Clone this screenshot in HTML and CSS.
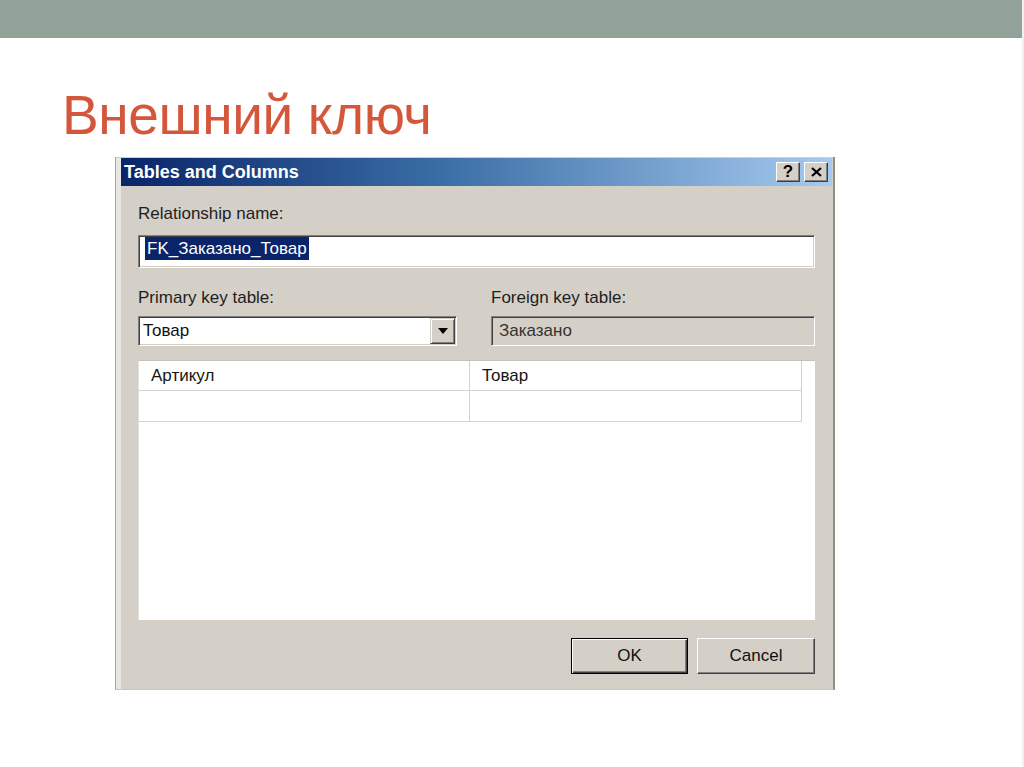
FILE: index.html
```html
<!DOCTYPE html>
<html lang="ru">
<head>
<meta charset="utf-8">
<title>Внешний ключ</title>
<link rel="stylesheet" href="styles.css">
</head>
<body>
<div class="page">
  <div class="topbar"></div>
  <h1 class="slide-title">Внешний ключ</h1>
  <div class="dialog">
    <div class="frame">
      <div class="titlebar">
        <span class="caption">Tables and Columns</span>
        <div class="tb-buttons">
          <span class="tb-btn help">?</span>
          <span class="tb-btn close">
            <svg width="11" height="10" viewBox="0 0 11 10"><path d="M1 1 L10 9 M10 1 L1 9" stroke="#000" stroke-width="2.2" fill="none"/></svg>
          </span>
        </div>
      </div>
      <div class="content">
        <div class="label">Relationship name:</div>
        <div class="field name-field"><span class="sel">FK_Заказано_Товар</span></div>
        <div class="keys">
          <div class="col">
            <div class="label">Primary key table:</div>
            <div class="field combo">
              <span>Товар</span>
              <span class="dd"><svg width="10" height="6" viewBox="0 0 10 6"><path d="M0 0 H10 L5 6 Z" fill="#000"/></svg></span>
            </div>
          </div>
          <div class="col">
            <div class="label">Foreign key table:</div>
            <div class="field disabled">Заказано</div>
          </div>
        </div>
        <div class="grid">
          <div class="grid-table">
            <div class="cell">Артикул</div>
            <div class="cell">Товар</div>
            <div class="cell"></div>
            <div class="cell"></div>
          </div>
        </div>
        <div class="actions">
          <button class="btn default">OK</button>
          <button class="btn cancel">Cancel</button>
        </div>
      </div>
    </div>
  </div>
</div>
</body>
</html>
```

FILE: styles.css
```css
html, body {
  margin: 0;
  padding: 0;
  background: #ffffff;
}

body {
  font-family: "Liberation Sans", Arial, sans-serif;
}

.page {
  width: 1024px;
  height: 767px;
  overflow: hidden;
  box-sizing: border-box;
  border-right: 2px solid #f0f0f0;
}

.topbar {
  height: 38px;
  background: #93a299;
}

.slide-title {
  margin: 50px 0 0 62px;
  height: 55px;
  font-family: "Liberation Sans", Arial, sans-serif;
  font-weight: 400;
  font-size: 55px;
  line-height: 55px;
  letter-spacing: -0.4px;
  color: #d4573b;
}

.dialog {
  margin: 14px 0 0 115px;
  width: 720px;
  height: 533px;
  box-sizing: border-box;
  background: #d4d0c8;
  border-left: 1px solid #a5a39d;
  border-right: 2px solid #8f8d87;
  border-bottom: 1px solid #c8c6c0;
  padding: 1px 1px 0 0;
  display: flex;
}

.frame {
  flex: 1;
  border-left: 5px solid #e9e7e1;
  display: flex;
  flex-direction: column;
}

.titlebar {
  height: 28px;
  flex: none;
  background: linear-gradient(90deg, #0a246a 0%, #3a6ea5 45%, #a6caf0 100%);
  display: flex;
  align-items: center;
  justify-content: space-between;
  padding: 0 4px 0 3px;
}

.caption {
  color: #ffffff;
  font-weight: bold;
  font-size: 18px;
}

.tb-buttons {
  display: flex;
  gap: 4px;
}

.tb-btn {
  width: 24px;
  height: 20px;
  box-sizing: border-box;
  background: #d4d0c8;
  border: 1px solid;
  border-color: #ffffff #404040 #404040 #ffffff;
  box-shadow: inset -1px -1px #808080;
  display: flex;
  align-items: center;
  justify-content: center;
  font-family: "Liberation Sans", Arial, sans-serif;
  font-weight: bold;
  font-size: 17px;
  color: #000;
}

.content {
  flex: 1;
  padding: 18px 17px 0 17px;
  display: flex;
  flex-direction: column;
}

.label {
  font-size: 17px;
  line-height: 20px;
  color: #1e1e1e;
}

.field {
  box-sizing: border-box;
  background: #ffffff;
  border: 1px solid;
  border-color: #808080 #ffffff #ffffff #808080;
  box-shadow: inset 1px 1px #404040, inset -1px -1px #d4d0c8;
  display: flex;
  align-items: center;
  font-size: 17px;
  color: #111;
}

.name-field {
  margin-top: 11px;
  height: 33px;
  padding-left: 6px;
  align-items: flex-start;
}

.sel {
  margin-top: 1px;
  height: 23px;
  line-height: 23px;
  padding: 0 2px;
  background: #0a246a;
  color: #ffffff;
}

.keys {
  margin-top: 20px;
  display: grid;
  grid-template-columns: 319px 1fr;
  column-gap: 34px;
}

.keys .field {
  margin-top: 8px;
  height: 30px;
}

.combo {
  padding: 0 1px 0 4px;
}

.dd {
  margin-left: auto;
  width: 25px;
  height: 26px;
  box-sizing: border-box;
  background: #d4d0c8;
  border: 1px solid;
  border-color: #d4d0c8 #404040 #404040 #d4d0c8;
  box-shadow: inset 1px 1px #ffffff, inset -1px -1px #808080;
  display: flex;
  align-items: center;
  justify-content: center;
}

.disabled {
  background: #d4d0c8;
  color: #333;
  padding-left: 7px;
}

.grid {
  margin-top: 14px;
  height: 260px;
  box-sizing: border-box;
  background: #ffffff;
  border-top: 1px solid #c4c2bc;
  border-left: 1px solid #e4e2dc;
}

.grid-table {
  width: 664px;
  display: grid;
  grid-template-columns: 331px 332px;
  grid-auto-rows: 30px 31px;
}

.cell {
  box-sizing: border-box;
  border-right: 1px solid #d2d2d2;
  border-bottom: 1px solid #d2d2d2;
  padding-left: 12px;
  display: flex;
  align-items: center;
  font-size: 17px;
  color: #151515;
}

.actions {
  margin-top: 18px;
  display: flex;
  justify-content: flex-end;
  gap: 9px;
}

.btn {
  height: 36px;
  box-sizing: border-box;
  background: #d4d0c8;
  border: 1px solid;
  border-color: #ffffff #404040 #404040 #ffffff;
  box-shadow: inset -1px -1px #808080;
  font-family: "Liberation Sans", Arial, sans-serif;
  font-size: 17px;
  color: #111;
  padding: 0;
}

.btn.default {
  width: 117px;
  border: 1px solid #000;
  box-shadow: inset 1px 1px #ffffff, inset -1px -1px #404040, inset -2px -2px #808080;
}

.btn.cancel {
  width: 118px;
}
```
